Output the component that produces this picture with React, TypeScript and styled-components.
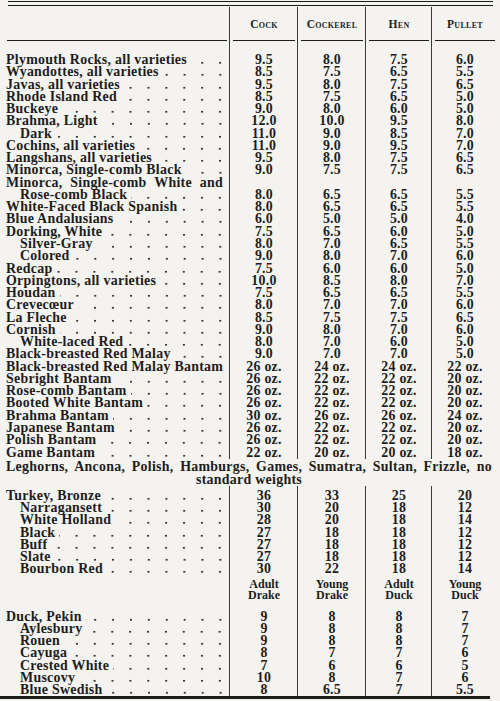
import styled, { createGlobalStyle } from 'styled-components';

const PAPER = '#f4f3ef';
const INK = '#1d1d1d';
const ROW = 12.28;

type Values = [string, string, string, string];

interface Entry {
  label: string;
  values?: Values;
  sub?: boolean;
  justify?: boolean;
}

const fowls: Entry[] = [
  { label: 'Plymouth Rocks, all varieties', values: ['9.5', '8.0', '7.5', '6.0'] },
  { label: 'Wyandottes, all varieties', values: ['8.5', '7.5', '6.5', '5.5'] },
  { label: 'Javas, all varieties', values: ['9.5', '8.0', '7.5', '6.5'] },
  { label: 'Rhode Island Red', values: ['8.5', '7.5', '6.5', '5.0'] },
  { label: 'Buckeye', values: ['9.0', '8.0', '6.0', '5.0'] },
  { label: 'Brahma, Light', values: ['12.0', '10.0', '9.5', '8.0'] },
  { label: 'Dark', values: ['11.0', '9.0', '8.5', '7.0'], sub: true },
  { label: 'Cochins, all varieties', values: ['11.0', '9.0', '9.5', '7.0'] },
  { label: 'Langshans, all varieties', values: ['9.5', '8.0', '7.5', '6.5'] },
  { label: 'Minorca, Single-comb Black', values: ['9.0', '7.5', '7.5', '6.5'] },
  { label: 'Minorca, Single-comb White and', justify: true },
  { label: 'Rose-comb Black', values: ['8.0', '6.5', '6.5', '5.5'], sub: true },
  { label: 'White-Faced Black Spanish', values: ['8.0', '6.5', '6.5', '5.5'] },
  { label: 'Blue Andalusians', values: ['6.0', '5.0', '5.0', '4.0'] },
  { label: 'Dorking, White', values: ['7.5', '6.5', '6.0', '5.0'] },
  { label: 'Silver-Gray', values: ['8.0', '7.0', '6.5', '5.5'], sub: true },
  { label: 'Colored', values: ['9.0', '8.0', '7.0', '6.0'], sub: true },
  { label: 'Redcap', values: ['7.5', '6.0', '6.0', '5.0'] },
  { label: 'Orpingtons, all varieties', values: ['10.0', '8.5', '8.0', '7.0'] },
  { label: 'Houdan', values: ['7.5', '6.5', '6.5', '5.5'] },
  { label: 'Crevecœur', values: ['8.0', '7.0', '7.0', '6.0'] },
  { label: 'La Fleche', values: ['8.5', '7.5', '7.5', '6.5'] },
  { label: 'Cornish', values: ['9.0', '8.0', '7.0', '6.0'] },
  { label: 'White-laced Red', values: ['8.0', '7.0', '6.0', '5.0'], sub: true },
  { label: 'Black-breasted Red Malay', values: ['9.0', '7.0', '7.0', '5.0'] },
  { label: 'Black-breasted Red Malay Bantam', values: ['26 oz.', '24 oz.', '24 oz.', '22 oz.'] },
  { label: 'Sebright Bantam', values: ['26 oz.', '22 oz.', '22 oz.', '20 oz.'] },
  { label: 'Rose-comb Bantam', values: ['26 oz.', '22 oz.', '22 oz.', '20 oz.'] },
  { label: 'Booted White Bantam', values: ['26 oz.', '22 oz.', '22 oz.', '20 oz.'] },
  { label: 'Brahma Bantam', values: ['30 oz.', '26 oz.', '26 oz.', '24 oz.'] },
  { label: 'Japanese Bantam', values: ['26 oz.', '22 oz.', '22 oz.', '20 oz.'] },
  { label: 'Polish Bantam', values: ['26 oz.', '22 oz.', '22 oz.', '20 oz.'] },
  { label: 'Game Bantam', values: ['22 oz.', '20 oz.', '20 oz.', '18 oz.'] },
];

const turkeys: Entry[] = [
  { label: 'Turkey, Bronze', values: ['36', '33', '25', '20'] },
  { label: 'Narragansett', values: ['30', '20', '18', '12'], sub: true },
  { label: 'White Holland', values: ['28', '20', '18', '14'], sub: true },
  { label: 'Black', values: ['27', '18', '18', '12'], sub: true },
  { label: 'Buff', values: ['27', '18', '18', '12'], sub: true },
  { label: 'Slate', values: ['27', '18', '18', '12'], sub: true },
  { label: 'Bourbon Red', values: ['30', '22', '18', '14'], sub: true },
];

const ducks: Entry[] = [
  { label: 'Duck, Pekin', values: ['9', '8', '8', '7'] },
  { label: 'Aylesbury', values: ['9', '8', '8', '7'], sub: true },
  { label: 'Rouen', values: ['9', '8', '8', '7'], sub: true },
  { label: 'Cayuga', values: ['8', '7', '7', '6'], sub: true },
  { label: 'Crested White', values: ['7', '6', '6', '5'], sub: true },
  { label: 'Muscovy', values: ['10', '8', '7', '6'], sub: true },
  { label: 'Blue Swedish', values: ['8', '6.5', '7', '5.5'], sub: true },
];

const GlobalStyle = createGlobalStyle`
  body {
    margin: 0;
    background: ${PAPER};
    color: ${INK};
    font-family: "Liberation Serif", "DejaVu Serif", serif;
  }
`;

const columns = '224px 68px 68px 66px 66px';

const ruled = `
  background-image:
    linear-gradient(#3a3a3a, #3a3a3a),
    linear-gradient(#3a3a3a, #3a3a3a),
    linear-gradient(#3a3a3a, #3a3a3a),
    linear-gradient(#3a3a3a, #3a3a3a);
  background-size: 1px 100%;
  background-repeat: no-repeat;
  background-position: 223px 0, 291px 0, 359px 0, 425px 0;
`;

const Page = styled.div`
  width: 500px;
  height: 701px;
  overflow: hidden;
`;

const Table = styled.div`
  width: 492px;
  margin-left: 6px;
  padding-top: 1px;
`;

const TopRules = styled.div`
  width: 485px;
  height: 3px;
  margin-left: 2px;
  border-top: 1px solid ${INK};
  border-bottom: 1.5px solid ${INK};
`;

const HeaderRow = styled.div`
  display: grid;
  grid-template-columns: ${columns};
  height: 34px;
  margin-top: 1px;
  ${ruled}
`;

const HeaderCell = styled.div<{ $first?: boolean }>`
  position: relative;
  display: flex;
  align-items: center;
  justify-content: center;
  font-size: 11.5px;
  font-weight: bold;
  font-variant: small-caps;
  letter-spacing: 0.3px;

  &::after {
    content: '';
    position: absolute;
    left: ${({ $first }) => ($first ? '1px' : '3px')};
    right: 3px;
    bottom: 0;
    height: 1.5px;
    background: ${INK};
  }
`;

const Section = styled.div<{ $padTop?: number }>`
  padding-top: ${({ $padTop }) => $padTop ?? 0}px;
  ${ruled}
`;

const Row = styled.div`
  display: grid;
  grid-template-columns: ${columns};
  height: ${ROW}px;
  line-height: ${ROW}px;
  font-size: 13.9px;
  font-weight: bold;
  letter-spacing: 0.28px;
`;

const LabelCell = styled.div<{ $sub?: boolean }>`
  display: flex;
  padding-left: ${({ $sub }) => ($sub ? 14 : 0)}px;
  white-space: nowrap;
`;

const JustifiedLabel = styled.div`
  padding-right: 7px;
  white-space: nowrap;
  text-align: justify;
  text-align-last: justify;
`;

const Leader = styled.span`
  flex: 1;
  margin-left: 4px;
  background-image: radial-gradient(circle at 50% 72%, #333 0.85px, transparent 1.3px);
  background-size: 17.9px ${ROW}px;
  background-repeat: repeat-x;
  background-position: right 1px top 0;
`;

const ValueCell = styled.div`
  text-align: center;
  white-space: nowrap;
`;

const Note = styled.div`
  width: 486px;
  margin-top: 1px;
  font-size: 13.9px;
  font-weight: bold;
  letter-spacing: 0.28px;
  line-height: 13px;
`;

const NoteLine = styled.div<{ $last?: boolean }>`
  white-space: nowrap;
  text-align: ${({ $last }) => ($last ? 'center' : 'justify')};
  text-align-last: ${({ $last }) => ($last ? 'center' : 'justify')};
`;

const DuckHead = styled.div`
  display: grid;
  grid-template-columns: ${columns};
  padding-top: 3px;
  padding-bottom: 10px;
  font-size: 12px;
  font-weight: bold;
  line-height: 11px;
`;

const DuckHeadCell = styled.div`
  text-align: center;
`;

const BottomRule = styled.div`
  width: 490px;
  height: 3px;
  background: ${INK};
`;

const EntryRow = ({ entry }: { entry: Entry }) => (
  <Row>
    {entry.justify ? (
      <JustifiedLabel>{entry.label}</JustifiedLabel>
    ) : (
      <LabelCell $sub={entry.sub}>
        <span>{entry.label}</span>
        <Leader />
      </LabelCell>
    )}
    {(entry.values ?? ['', '', '', '']).map((v, i) => (
      <ValueCell key={i}>{v}</ValueCell>
    ))}
  </Row>
);

const App = () => {
  return (
    <Page>
      <GlobalStyle />
      <Table>
        <TopRules />
        <HeaderRow>
          <HeaderCell $first />
          <HeaderCell>Cock</HeaderCell>
          <HeaderCell>Cockerel</HeaderCell>
          <HeaderCell>Hen</HeaderCell>
          <HeaderCell>Pullet</HeaderCell>
        </HeaderRow>
        <Section $padTop={13}>
          {fowls.map((e) => (
            <EntryRow key={e.label} entry={e} />
          ))}
        </Section>
        <Note>
          <NoteLine>Leghorns, Ancona, Polish, Hamburgs, Games, Sumatra, Sultan, Frizzle, no</NoteLine>
          <NoteLine $last>standard weights</NoteLine>
        </Note>
        <Section $padTop={4}>
          {turkeys.map((e) => (
            <EntryRow key={e.label} entry={e} />
          ))}
          <DuckHead>
            <div />
            <DuckHeadCell>Adult<br />Drake</DuckHeadCell>
            <DuckHeadCell>Young<br />Drake</DuckHeadCell>
            <DuckHeadCell>Adult<br />Duck</DuckHeadCell>
            <DuckHeadCell>Young<br />Duck</DuckHeadCell>
          </DuckHead>
          {ducks.map((e) => (
            <EntryRow key={e.label} entry={e} />
          ))}
        </Section>
      </Table>
      <BottomRule />
    </Page>
  );
};

export default App;
